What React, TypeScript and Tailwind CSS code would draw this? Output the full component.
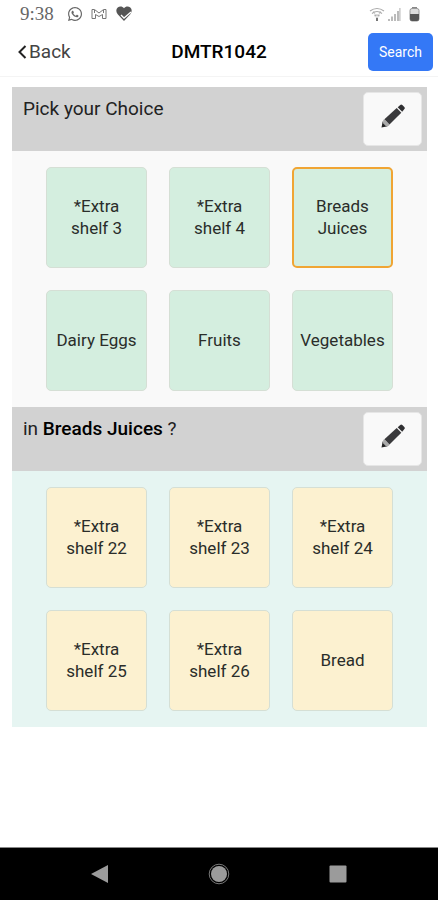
import { FaWhatsapp } from 'react-icons/fa';

type Tile = { label: string; selected?: boolean };

const shelves: Tile[] = [
  { label: '*Extra shelf 3' },
  { label: '*Extra shelf 4' },
  { label: 'Breads Juices', selected: true },
  { label: 'Dairy Eggs' },
  { label: 'Fruits' },
  { label: 'Vegetables' },
];

const items: Tile[] = [
  { label: '*Extra shelf 22' },
  { label: '*Extra shelf 23' },
  { label: '*Extra shelf 24' },
  { label: '*Extra shelf 25' },
  { label: '*Extra shelf 26' },
  { label: 'Bread' },
];

function StatusBar() {
  return (
    <div className="flex h-7 items-center justify-between pl-5 pr-[18px] text-[#666]">
      <div className="flex items-center">
        <span className="w-[47px] font-['Liberation_Serif',serif] text-[19px] leading-7">9:38</span>
        <FaWhatsapp className="size-4" />
        <svg className="ml-2 h-3 w-4" viewBox="0 0 16 12" fill="none" stroke="#777" strokeWidth="1">
          <path d="M1 1.5h2.5L8 5l4.5-3.500H15v9h-3.500V6.500L8 8.500 4.500 6.500v4H1z" />
          <path d="M3.500 2v3M12.500 2v3" />
        </svg>
        <svg className="ml-2 h-4 w-[18px]" viewBox="0 0 18 16">
          <path d="M9 2.300C10.500.2 13.500 0 15.300 1.600 17.300 3.400 17 6.400 15.300 8.200L9 15 2.700 8.200C1 6.400.7 3.400 2.700 1.600 4.500 0 7.500.2 9 2.300z" fill="#555" />
          <path d="M6 9l3 3 7-6" fill="none" stroke="#fff" strokeWidth="1.300" />
        </svg>
      </div>
      <div className="flex items-center">
        <svg className="h-[14px] w-4" viewBox="0 0 16 14" fill="none" stroke="#aaa" strokeWidth="1.200">
          <path d="M1 4q7-5 14 0M3 6.500q5-4 10 0M5.500 9q2.500-2 5 0" />
          <path d="M4.500 4l3.500 8 3.500-8" strokeWidth=".6" />
          <path d="M7 11h2v3H7z" fill="#777" stroke="none" />
        </svg>
        <svg className="ml-[3px] h-[14px] w-[13px]" viewBox="0 0 13 14" fill="#bbb">
          <path d="M0 12h2v2H0zM3 9.500h2V14H3zM6 7h2v7H6zM9 4h2v10H9zM11.300 1h1.200v13h-1.200z" />
        </svg>
        <svg className="ml-2 h-4 w-[11px]" viewBox="0 0 11 16">
          <path d="M3 1h5v2H3z" fill="#888" />
          <rect x="1" y="2.500" width="9" height="12.500" rx="2" fill="#ddd" stroke="#999" />
          <path d="M1 8h9v5q0 2-2 2H3q-2 0-2-2z" fill="#555" />
        </svg>
      </div>
    </div>
  );
}

function PencilIcon() {
  return (
    <svg className="size-6" viewBox="0 0 24 24" aria-hidden="true">
      <path d="M.5 23.500l1.200-6.200 5 5z" fill="#222" />
      <path d="M2.300 16l.8-.7 5.500 5.500-.8.900-2.800.6-3-3z" fill="#aaa" />
      <path d="M3.400 15.200L15.700 4.100l4.600 4.600L8.500 20.500z" fill="#3a3a3c" />
      <path d="M16.700 3.200l2.600-2.300q1-.7 2 .2l2 2q.9 1 .1 2l-2.200 2.600z" fill="#303032" />
    </svg>
  );
}

function SectionHeader({ children, editLabel }: { children: React.ReactNode; editLabel: string }) {
  return (
    <header className="flex h-16 items-start justify-between bg-[#d2d2d2] pl-[11px] pr-[5px] pt-[5px]">
      <h2 className="pt-[5px] text-[19px] leading-6 text-[#222]">{children}</h2>
      <button
        type="button"
        aria-label={editLabel}
        className="flex h-[54px] w-[59px] items-center justify-center rounded-[5px] border border-[#e6e6e6] bg-[#f9f9f9] pb-[6px]"
      >
        <PencilIcon />
      </button>
    </header>
  );
}

function TileGrid({ tiles, tone }: { tiles: Tile[]; tone: 'green' | 'yellow' }) {
  const panel = tone === 'green' ? 'bg-[#f9f9f9]' : 'bg-[#e6f5f2]';
  const fill = tone === 'green' ? 'bg-[#d4eedf]' : 'bg-[#fcf1d0]';
  return (
    <div className={`grid grid-cols-[repeat(3,101px)] justify-center gap-[22px] py-4 ${panel}`}>
      {tiles.map((tile) => (
        <button
          key={tile.label}
          type="button"
          aria-pressed={Boolean(tile.selected)}
          className={`flex h-[101px] items-center justify-center rounded-[5px] pb-[2px] text-[17px] leading-[22px] text-[#2a2d2a] ${fill} ${
            tile.selected ? 'border-2 border-[#f0a534]' : 'border border-[#d5dfd5]'
          }`}
        >
          <span className={tile.label.includes('shelf') || tile.selected ? 'w-[70px]' : ''}>{tile.label}</span>
        </button>
      ))}
    </div>
  );
}

function NavigationBar() {
  return (
    <nav className="grid h-[53px] grid-cols-3 items-center border-t border-[#888] bg-black px-10" aria-label="System">
      <button type="button" aria-label="Back" className="flex justify-center">
        <svg className="size-5" viewBox="0 0 20 20">
          <path d="M1 10L18 1v18z" fill="#9b9b9b" />
        </svg>
      </button>
      <button type="button" aria-label="Home" className="flex justify-center">
        <svg className="size-[22px]" viewBox="0 0 22 22">
          <circle cx="11" cy="11" r="9.800" fill="none" stroke="#777" />
          <circle cx="11" cy="11" r="8" fill="#9b9b9b" />
        </svg>
      </button>
      <button type="button" aria-label="Recent apps" className="flex justify-center">
        <svg className="size-[18px]" viewBox="0 0 18 18">
          <rect x=".5" y=".5" width="17" height="17" rx="1" fill="#9b9b9b" />
        </svg>
      </button>
    </nav>
  );
}

export default function App() {
  return (
    <div className="flex min-h-screen flex-col bg-white font-[Roboto,sans-serif]">
      <StatusBar />
      <header className="grid h-[49px] grid-cols-[1fr_auto_1fr] items-center border-b border-[#f4f4f4] px-[5px]">
        <button type="button" className="flex items-center justify-self-start pl-[13px] text-[19px] leading-6 text-[#444]">
          <svg className="mr-[2px] h-[14px] w-[9px]" viewBox="0 0 9 14" fill="none" stroke="#222" strokeWidth="2">
            <path d="M7.500 1L1.500 7l6 6" />
          </svg>
          Back
        </button>
        <h1 className="text-[19px] font-medium leading-6 text-black">DMTR1042</h1>
        <button type="button" className="h-[38px] w-[65px] justify-self-end rounded-[5px] bg-[#3478f6] text-sm text-white">
          Search
        </button>
      </header>
      <main className="ml-3 mr-[11px] grow pb-4 pt-[10px]">
        <section>
          <SectionHeader editLabel="Edit choices">Pick your Choice</SectionHeader>
          <TileGrid tiles={shelves} tone="green" />
        </section>
        <section>
          <SectionHeader editLabel="Edit Breads Juices">
            in <strong className="font-medium text-black">Breads Juices</strong> ?
          </SectionHeader>
          <TileGrid tiles={items} tone="yellow" />
        </section>
      </main>
      <NavigationBar />
    </div>
  );
}
